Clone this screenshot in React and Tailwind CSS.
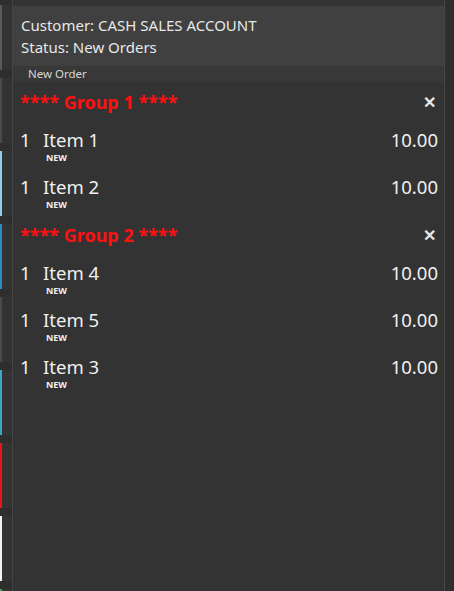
const stripes = ["#5a5a5a", "#4a4a4a", "#8ccfe8", "#2a89c6", "#4a4a4a", "#3aa7c9", "#e81515", "#f2f2f2", "#2fa84f"];

const groups = [
  { name: "**** Group 1 ****", items: [{ qty: 1, name: "Item 1", price: "10.00" }, { qty: 1, name: "Item 2", price: "10.00" }] },
  {
    name: "**** Group 2 ****",
    items: [
      { qty: 1, name: "Item 4", price: "10.00" },
      { qty: 1, name: "Item 5", price: "10.00" },
      { qty: 1, name: "Item 3", price: "10.00" },
    ],
  },
];

export default function App() {
  return (
    <div
      className="flex h-[591px] w-[454px] overflow-hidden bg-[#2e2e2e] text-[#f0f0f0]"
      style={{ fontFamily: '"Noto Sans", "Open Sans", sans-serif' }}
    >
      {/* cut-off button column on the left */}
      <div className="flex w-[13px] shrink-0 flex-col gap-[8px] border-r border-[#444] pt-[5px]">
        {stripes.map((c, i) => (
          <div key={i} className="h-[65px] shrink-0 border-l-2 bg-[#333]" style={{ borderLeftColor: c }} />
        ))}
      </div>

      <div className="flex w-[432px] shrink-0 flex-col border-r border-[#474747] bg-[#333] pt-[6px]">
        <div className="flex h-[60px] flex-col justify-center bg-[#404040] px-[8px] text-[15px] leading-[22px] text-[#e8e8e8]">
          <div>Customer: CASH SALES ACCOUNT</div>
          <div>Status: New Orders</div>
        </div>
        <div className="flex h-[16px] items-center bg-[#383838] pl-[15px] text-[11.5px] text-[#d6d6d6]">New Order</div>

        <div className="flex flex-col gap-[2px] pl-[7px] pr-[6px] pt-[8px]">
          {groups.map((g) => (
            <div key={g.name}>
              <div className="flex h-[24px] items-center justify-between">
                <span className="text-[18px] font-bold text-[#ff1010]">{g.name}</span>
                <span className="pr-[2px] text-[16px] font-bold text-[#e6e6e6]">✕</span>
              </div>
              <div className="pt-[13px]">
                {g.items.map((it) => (
                  <div key={it.name} className="h-[47px]">
                    <div className="flex items-center justify-between text-[18.5px] leading-[26px]">
                      <div className="flex">
                        <span className="w-[23px]">{it.qty}</span>
                        <span>{it.name}</span>
                      </div>
                      <span>{it.price}</span>
                    </div>
                    <div className="pl-[26px] text-[9px] font-bold leading-[10px]">NEW</div>
                  </div>
                ))}
              </div>
            </div>
          ))}
        </div>
      </div>
    </div>
  );
}
